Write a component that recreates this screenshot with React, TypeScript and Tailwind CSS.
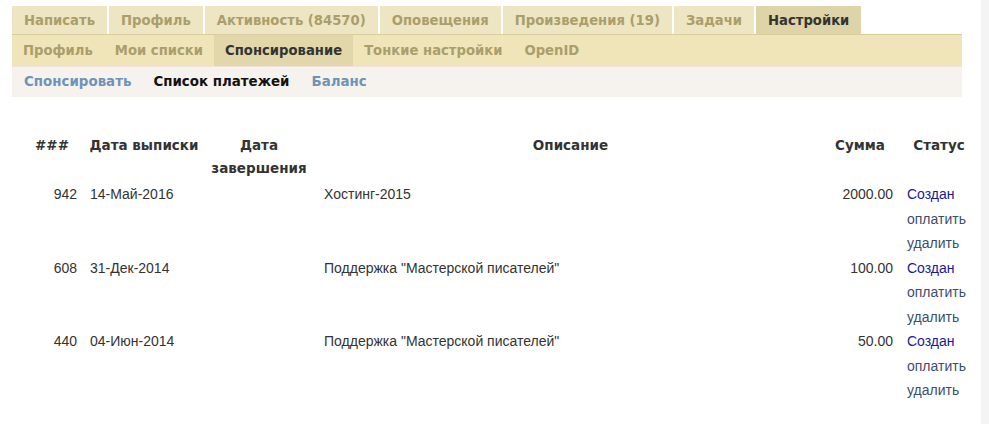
const topTabs = [
  { label: "Написать" },
  { label: "Профиль" },
  { label: "Активность (84570)" },
  { label: "Оповещения" },
  { label: "Произведения (19)" },
  { label: "Задачи" },
  { label: "Настройки", active: true },
];

const subTabs = [
  { label: "Профиль" },
  { label: "Мои списки" },
  { label: "Спонсирование", active: true },
  { label: "Тонкие настройки" },
  { label: "OpenID" },
];

const payments = [
  { id: 942, date: "14-Май-2016", desc: "Хостинг-2015", sum: "2000.00" },
  { id: 608, date: "31-Дек-2014", desc: 'Поддержка "Мастерской писателей"', sum: "100.00" },
  { id: 440, date: "04-Июн-2014", desc: 'Поддержка "Мастерской писателей"', sum: "50.00" },
];

export default function App() {
  return (
    <div className="flex min-h-[424px] bg-white font-['DejaVu_Sans',sans-serif]">
      <div className="flex-1 pt-[6px] pl-[12px]">
        <nav className="w-[950px]">
          <ul className="flex gap-[2px]">
            {topTabs.map((t) => (
              <li
                key={t.label}
                className={`h-[28px] px-[12px] pt-[1px] flex items-center text-[13.2px] font-bold ${
                  t.active ? "bg-[#ddd4a8] text-[#333]" : "bg-[#eee5c3] text-[#aa9e6b]"
                }`}
              >
                {t.label}
              </li>
            ))}
          </ul>
          <ul className="flex h-[32px] bg-[#efe5b9] border-t border-[#d8cd9c]">
            {subTabs.map((t) => (
              <li
                key={t.label}
                className={`px-[11px] flex items-center text-[13.2px] font-bold ${
                  t.active ? "bg-[#e1d7aa] text-[#333]" : "text-[#aa9e6b]"
                }`}
              >
                {t.label}
              </li>
            ))}
          </ul>
          <ul className="flex gap-[22px] h-[31px] px-[12px] items-center bg-[#f6f3ef] border-t border-[#f1e2dc] text-[13.4px] font-bold">
            <li className="text-[#6f93b6]">Спонсировать</li>
            <li className="text-[#111]">Список платежей</li>
            <li className="text-[#6f93b6]">Баланс</li>
          </ul>
        </nav>

        <table className="mt-[37px] ml-[10px] w-[953px] table-fixed border-collapse text-[#333]">
          <colgroup>
            <col className="w-[60px]" />
            <col className="w-[121px]" />
            <col className="w-[112px]" />
            <col className="w-[507px]" />
            <col className="w-[76px]" />
            <col className="w-[77px]" />
          </colgroup>
          <thead>
            <tr className="text-[13.5px] font-bold leading-[23px] align-top">
              <th className="pl-[5px] pr-[5px] pb-[2px] text-center">###</th>
              <th className="pl-[3px] pr-0 pb-[2px] text-center whitespace-nowrap">Дата выписки</th>
              <th className="px-[5px] pb-[2px] text-center">Дата завершения</th>
              <th className="pl-[9px] pr-[5px] pb-[2px] text-center">Описание</th>
              <th className="px-[5px] pb-[2px] text-center">Сумма</th>
              <th className="pl-[9px] pr-[4px] pb-[2px] text-center">Статус</th>
            </tr>
          </thead>
          <tbody className="font-['Liberation_Sans',sans-serif] text-[14px] leading-[24.5px]">
            {payments.map((p) => (
              <tr key={p.id} className="align-top">
                <td className="pr-[5px] text-right">{p.id}</td>
                <td className="pl-[8px]">{p.date}</td>
                <td className="px-[5px]"></td>
                <td className="pl-[9px]">{p.desc}</td>
                <td className="pr-[5px] text-right">{p.sum}</td>
                <td className="pl-[9px]">
                  <div className="text-[#1a1a96]">Создан</div>
                  <div className="text-[#3d4d6d]">оплатить</div>
                  <div className="text-[#3d4d6d]">удалить</div>
                </td>
              </tr>
            ))}
          </tbody>
        </table>
      </div>
      <div className="w-[8px] bg-[#f4f4f4]" />
    </div>
  );
}
